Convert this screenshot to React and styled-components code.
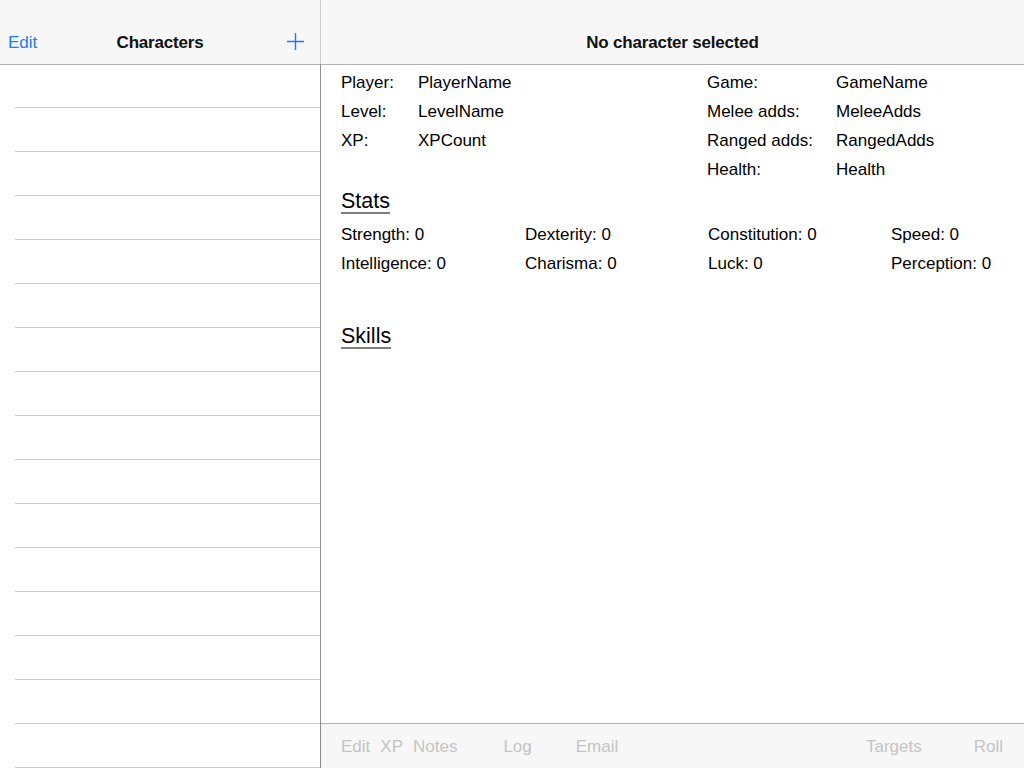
import React from "react";
import styled, { createGlobalStyle } from "styled-components";

const Global = createGlobalStyle`
  html, body { margin: 0; padding: 0; background: #fff; overflow: hidden; }
  body { font-family: "Liberation Sans", Arial, Helvetica, sans-serif; color: #000; }
  * { box-sizing: border-box; }
`;

const Screen = styled.div`
  width: 1024px;
  height: 768px;
  display: flex;
  overflow: hidden;
  font-size: 17px;
`;

const Sidebar = styled.div`
  width: 321px;
  flex: none;
  display: flex;
  flex-direction: column;
`;

const NavBar = styled.div`
  height: 65px;
  flex: none;
  padding-top: 21px;
  background: #f7f7f7;
  border-bottom: 1px solid #b2b2b2;
  border-right: ${(p) => (p.$divider ? "1px solid #cfcfcf" : "none")};
  display: flex;
  align-items: center;
  justify-content: center;
`;

const NavInner = styled.div`
  height: 43px;
  width: 100%;
  display: grid;
  grid-template-columns: ${(p) => (p.$sides ? "1fr auto 1fr" : "1fr")};
  align-items: center;
  justify-items: center;
`;

const NavTitle = styled.div`
  font-weight: 700;
  font-size: 17px;
  letter-spacing: -0.2px;
  color: #111;
  grid-column: ${(p) => (p.$sides ? "2" : "1")};
`;

const NavButton = styled.button`
  border: 0;
  background: none;
  padding: 0;
  font: inherit;
  font-size: 17px;
  color: #157efb;
  justify-self: ${(p) => (p.$right ? "end" : "start")};
  margin: ${(p) => (p.$right ? "-2px 15px 0 0" : "0 0 0 8px")};
  display: flex;
  align-items: center;
  height: 43px;
  cursor: pointer;
`;

const List = styled.div`
  flex: 1;
  margin-top: -1px;
  border-right: 1px solid #8e8e8e;
  overflow: hidden;
`;

const Row = styled.div`
  height: 44px;
  margin-left: 15px;
  border-bottom: 1px solid #c8c7cc;
`;

const Detail = styled.div`
  flex: 1;
  display: flex;
  flex-direction: column;
  min-width: 0;
`;

const Content = styled.div`
  flex: 1;
  padding: 3px 0 0 20px;
  display: flex;
  flex-direction: column;
`;

const InfoGrid = styled.div`
  display: grid;
  grid-template-columns: 77px 289px 129px 1fr;
  grid-auto-rows: 29px;
  align-items: center;
  line-height: 29px;
`;

const Cell = styled.div`
  white-space: nowrap;
`;

const SectionTitle = styled.div`
  align-self: flex-start;
  font-size: 21.5px;
  line-height: 21px;
  border-bottom: 2px solid #7d7d7d;
  margin-top: ${(p) => p.$mt}px;
`;

const StatsGrid = styled.div`
  margin-top: 6px;
  display: grid;
  grid-template-columns: 184px 183px 183px 1fr;
  grid-auto-rows: 29px;
  align-items: center;
  line-height: 29px;
`;

const Toolbar = styled.div`
  height: 45px;
  flex: none;
  background: #f7f7f7;
  border-top: 1px solid #b2b2b2;
  display: flex;
  align-items: center;
  padding: 2px 21px 0 20px;
  color: #c4c4c4;
  font-size: 17px;
`;

const ToolItem = styled.span`
  margin-left: ${(p) => p.$ml || 0}px;
  white-space: nowrap;
`;

const Spacer = styled.div`
  flex: 1;
`;

const PlusIcon = () => (
  <svg width="19" height="19" viewBox="0 0 19 19" fill="none">
    <path d="M9.5 1v17M1 9.5h17" stroke="#157efb" strokeWidth="1.4" />
  </svg>
);

const info = [
  ["Player:", "PlayerName", "Game:", "GameName"],
  ["Level:", "LevelName", "Melee adds:", "MeleeAdds"],
  ["XP:", "XPCount", "Ranged adds:", "RangedAdds"],
  ["", "", "Health:", "Health"],
];

const stats = [
  "Strength: 0",
  "Dexterity: 0",
  "Constitution: 0",
  "Speed: 0",
  "Intelligence: 0",
  "Charisma: 0",
  "Luck: 0",
  "Perception: 0",
];

export default function App() {
  return (
    <>
      <Global />
      <Screen>
        <Sidebar>
          <NavBar $divider>
            <NavInner $sides>
              <NavButton>Edit</NavButton>
              <NavTitle $sides>Characters</NavTitle>
              <NavButton $right aria-label="Add">
                <PlusIcon />
              </NavButton>
            </NavInner>
          </NavBar>
          <List>
            {Array.from({ length: 16 }).map((_, i) => (
              <Row key={i} />
            ))}
          </List>
        </Sidebar>
        <Detail>
          <NavBar>
            <NavInner>
              <NavTitle>No character selected</NavTitle>
            </NavInner>
          </NavBar>
          <Content>
            <InfoGrid>
              {info.flat().map((t, i) => (
                <Cell key={i}>{t}</Cell>
              ))}
            </InfoGrid>
            <SectionTitle $mt={7}>Stats</SectionTitle>
            <StatsGrid>
              {stats.map((s) => (
                <Cell key={s}>{s}</Cell>
              ))}
            </StatsGrid>
            <SectionTitle $mt={48}>Skills</SectionTitle>
          </Content>
          <Toolbar>
            <ToolItem>Edit</ToolItem>
            <ToolItem $ml={10}>XP</ToolItem>
            <ToolItem $ml={10}>Notes</ToolItem>
            <ToolItem $ml={46}>Log</ToolItem>
            <ToolItem $ml={44}>Email</ToolItem>
            <Spacer />
            <ToolItem>Targets</ToolItem>
            <ToolItem $ml={52}>Roll</ToolItem>
          </Toolbar>
        </Detail>
      </Screen>
    </>
  );
}
